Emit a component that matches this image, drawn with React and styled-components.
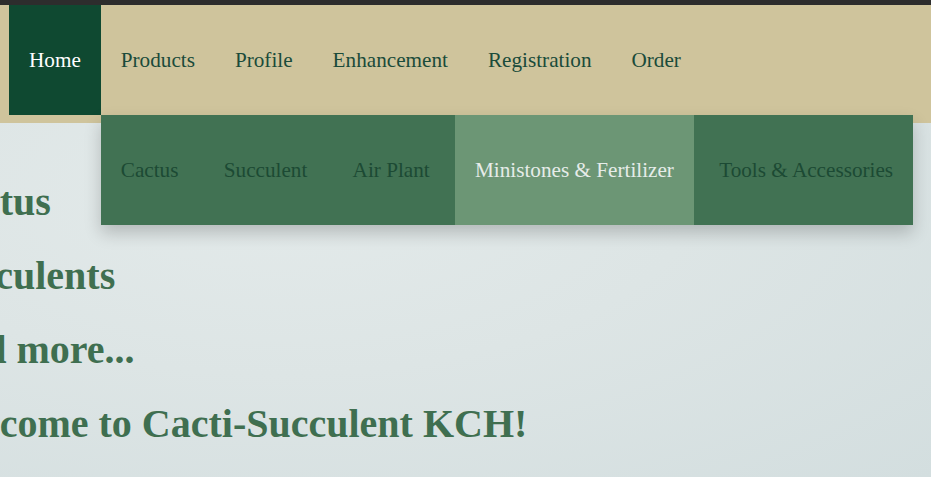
import React from "react";
import styled, { createGlobalStyle } from "styled-components";

const GlobalStyle = createGlobalStyle`
  html, body {
    margin: 0;
    padding: 0;
    height: 100%;
  }
  body {
    font-family: "Liberation Serif", "Times New Roman", serif;
    background: #dde5e5;
    overflow: hidden;
  }
`;

const TopStrip = styled.div`
  height: 5px;
  background: #2d2d2d;
`;

const Header = styled.header`
  background: #cfc49c;
  padding: 0 0 8px 9px;
  position: relative;
  z-index: 2;
`;

const NavList = styled.ul`
  display: flex;
  list-style: none;
  margin: 0;
  padding: 0;
`;

const NavItem = styled.li`
  position: relative;
  display: flex;
  align-items: center;
  height: 110px;
  padding: 0 20px;
  font-size: 21.2px;
  color: ${(p) => (p.$active ? "#ffffff" : "#1a4b3a")};
  background: ${(p) => (p.$active ? "#0f4931" : "transparent")};
  white-space: nowrap;
`;

// sub menu under Products, items sit a space apart like inline-blocks
const Dropdown = styled.ul`
  position: absolute;
  top: 100%;
  left: 0;
  display: flex;
  gap: 5.3px;
  list-style: none;
  margin: 0;
  padding: 0;
  background: #417253;
  box-shadow: 0 8px 16px rgba(0, 0, 0, 0.2);
`;

const DropItem = styled.li`
  display: flex;
  align-items: center;
  height: 110px;
  padding: 0 20px;
  font-size: 21.2px;
  white-space: nowrap;
  color: ${(p) => (p.$active ? "#e6ece9" : "#1c4a34")};
  background: ${(p) => (p.$active ? "#6c9675" : "transparent")};
`;

const Hero = styled.main`
  height: 354px;
  background: radial-gradient(ellipse at 30% 20%, #e3eaea 0%, #dde5e5 45%, #d3dedf 100%);
  padding-top: 56px;
  box-sizing: border-box;
  overflow: hidden;
`;

const Lines = styled.div`
  display: flex;
  flex-direction: column;
  gap: 28px;
  margin-left: -67px;
`;

const Line = styled.h1`
  margin: 0;
  font-size: 40px;
  line-height: 46px;
  font-weight: bold;
  color: #3f6f50;
  white-space: nowrap;
`;

const subMenu = [
  "Cactus",
  "Succulent",
  "Air Plant",
  "Ministones & Fertilizer",
  "Tools & Accessories",
];

export default function App() {
  return (
    <>
      <GlobalStyle />
      <TopStrip />
      <Header>
        <NavList>
          <NavItem $active>Home</NavItem>
          <NavItem>
            Products
            <Dropdown>
              {subMenu.map((s) => (
                <DropItem key={s} $active={s === "Ministones & Fertilizer"}>
                  {s}
                </DropItem>
              ))}
            </Dropdown>
          </NavItem>
          <NavItem>Profile</NavItem>
          <NavItem>Enhancement</NavItem>
          <NavItem>Registration</NavItem>
          <NavItem>Order</NavItem>
        </NavList>
      </Header>
      <Hero>
        <Lines>
          <Line>Cactus</Line>
          <Line>Succulents</Line>
          <Line>And more...</Line>
          <Line>Welcome to Cacti-Succulent KCH!</Line>
        </Lines>
      </Hero>
    </>
  );
}
